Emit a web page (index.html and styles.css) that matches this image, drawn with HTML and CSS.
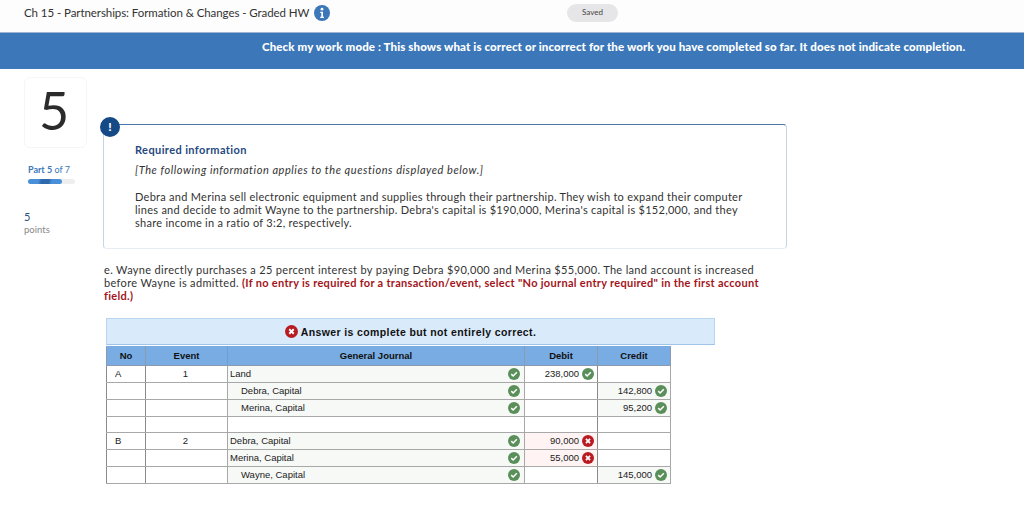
FILE: index.html
```html
<!DOCTYPE html>
<html lang="en">
<head>
<meta charset="utf-8">
<title>Ch 15 - Partnerships: Formation &amp; Changes - Graded HW</title>
<link rel="stylesheet" href="styles.css">
<svg width="0" height="0" class="defs">
  <symbol id="ok" viewBox="0 0 14 14"><circle cx="7" cy="7" r="7" fill="#5a8f5a"/><path d="M3.8 7.2 6 9.3 10.3 5" fill="none" stroke="#fff" stroke-width="1.8"/></symbol>
  <symbol id="no" viewBox="0 0 14 14"><circle cx="7" cy="7" r="7" fill="#b81c22"/><path d="M4.6 4.6 9.4 9.4M9.4 4.6 4.6 9.4" fill="none" stroke="#fff" stroke-width="2"/></symbol>
</svg>
</head>
<body>
<header class="topbar">
  <div class="title"><span class="title-text">Ch 15 - Partnerships: Formation &amp; Changes - Graded HW</span>
    <svg class="info" viewBox="0 0 16 16"><circle cx="8" cy="8" r="8" fill="#3b77b9"/><circle cx="8" cy="4.2" r="1.4" fill="#fff"/><path d="M6.2 6.8H9v5h1v1.2H6.2v-1.2h1.1V8H6.2z" fill="#fff"/></svg>
  </div>
  <div class="saved">Saved</div>
</header>
<div class="banner">Check my work mode : This shows what is correct or incorrect for the work you have completed so far. It does not indicate completion.</div>
<div class="page">
  <aside class="side">
    <div class="qnum">5</div>
    <div class="part"><b>Part 5</b> of 7</div>
    <div class="track"><div class="fill"></div></div>
    <div class="pts">5</div>
    <div class="ptlabel">points</div>
  </aside>
  <main class="main">
    <section class="req">
      <div class="badge">!</div>
      <h2 class="req-title">Required information</h2>
      <p class="req-note">[The following information applies to the questions displayed below.]</p>
      <p class="req-body">Debra and Merina sell electronic equipment and supplies through their partnership. They wish to expand their computer lines and decide to admit Wayne to the partnership. Debra's capital is $190,000, Merina's capital is $152,000, and they share income in a ratio of 3:2, respectively.</p>
    </section>
    <p class="question">e. Wayne directly purchases a 25 percent interest by paying Debra $90,000 and Merina $55,000. The land account is increased before Wayne is admitted. <strong>(If no entry is required for a transaction/event, select "No journal entry required" in the first account field.)</strong></p>
    <div class="answer"><svg class="ico"><use href="#no"/></svg>Answer is complete but not entirely correct.</div>
    <table class="journal">
      <colgroup><col class="c1"><col class="c2"><col class="c3"><col class="c4"><col class="c5"></colgroup>
      <thead><tr><th>No</th><th>Event</th><th>General Journal</th><th>Debit</th><th>Credit</th></tr></thead>
      <tbody>
        <tr><td class="no">A</td><td class="ev">1</td><td class="acct">Land<svg class="ico"><use href="#ok"/></svg></td><td class="num">238,000<svg class="ico"><use href="#ok"/></svg></td><td class="num"></td></tr>
        <tr><td></td><td></td><td class="acct ind">Debra, Capital<svg class="ico"><use href="#ok"/></svg></td><td class="num"></td><td class="num hit">142,800<svg class="ico"><use href="#ok"/></svg></td></tr>
        <tr><td></td><td></td><td class="acct ind">Merina, Capital<svg class="ico"><use href="#ok"/></svg></td><td class="num"></td><td class="num hit">95,200<svg class="ico"><use href="#ok"/></svg></td></tr>
        <tr class="blank"><td></td><td></td><td class="empty"></td><td></td><td></td></tr>
        <tr><td class="no">B</td><td class="ev">2</td><td class="acct">Debra, Capital<svg class="ico"><use href="#ok"/></svg></td><td class="num bad">90,000<svg class="ico"><use href="#no"/></svg></td><td class="num"></td></tr>
        <tr><td></td><td></td><td class="acct">Merina, Capital<svg class="ico"><use href="#ok"/></svg></td><td class="num bad">55,000<svg class="ico"><use href="#no"/></svg></td><td class="num"></td></tr>
        <tr><td></td><td></td><td class="acct ind">Wayne, Capital<svg class="ico"><use href="#ok"/></svg></td><td class="num"></td><td class="num hit">145,000<svg class="ico"><use href="#ok"/></svg></td></tr>
      </tbody>
    </table>
  </main>
</div>
</body>
</html>
```
FILE: styles.css
```css
* { box-sizing: border-box; }
html, body { margin: 0; padding: 0; }
body { width: 1024px; height: 512px; overflow: hidden; background: #fff; color: #2d2d2d; font-family: "Lato", "Open Sans", sans-serif; }
.defs { position: absolute; }
.topbar { height: 33px; display: flex; align-items: flex-start; background: #fdfdfd; border-bottom: 1px solid #9db5d3; padding: 4px 0 0 24px; }
.title { width: 543px; height: 18px; flex: none; display: flex; align-items: center; gap: 5px; font-size: 11.5px; letter-spacing: -.07px; color: #333; white-space: nowrap; }
.title-text { padding-bottom: 2px; }
.info { width: 16px; height: 16px; }
.saved { width: 51px; height: 18px; border-radius: 9px; background: #e6e5e8; font-size: 8px; line-height: 17px; text-align: center; color: #444; }
.banner { height: 36px; background: #3b77b9; color: #fff; font-size: 11.5px; font-weight: 900; padding: 6px 0 0 262px; line-height: 16px; letter-spacing: .12px; white-space: nowrap; }
.page { display: flex; }
.side { width: 103px; flex: none; padding: 8px 0 0 24px; }
.qnum { width: 63px; height: 71px; border: 1px solid #f6f6f6; border-radius: 6px; padding-right: 3px; font-size: 52px; line-height: 64px; text-align: center; color: #2b2b2b; font-weight: 400; }
.part { margin: 15px 0 0 4px; font-size: 9px; line-height: 13px; color: #3b77b9; }
.part b { font-weight: 700; }
.track { width: 47px; height: 5px; margin: 3px 0 0 4px; border-radius: 3px; background: #eeeeee; }
.fill { width: 34px; height: 5px; border-radius: 3px; background: linear-gradient(100deg, #4a90d9 0 30%, #2f69ad 40% 60%, #4a90d9 70%); }
.pts { margin-top: 26px; font-size: 11px; line-height: 14px; color: #2f4f7f; }
.ptlabel { font-size: 9.5px; line-height: 12px; color: #888; }
.main { width: 690px; flex: none; padding-top: 55px; }
.req { position: relative; width: 684px; height: 125px; border: 1px solid #c4d5e8; border-top: 1px solid #4a76a8; border-bottom-color: #e6edf5; border-radius: 4px; padding: 17px 30px 0 31px; }
.badge { position: absolute; left: -4px; top: -8px; width: 20px; height: 20px; border-radius: 50%; background: #164a86; color: #fff; font-weight: 900; font-size: 12px; line-height: 20px; text-align: center; }
.req-title { margin: 0; font-size: 11px; line-height: 15px; font-weight: 700; color: #1f4a80; letter-spacing: .4px; }
.req-note { margin: 6px 0 0; font-size: 11px; line-height: 14px; font-style: italic; color: #333; letter-spacing: .55px; }
.req-body { margin: 13px 0 0; font-size: 11px; line-height: 13px; color: #333; letter-spacing: .27px; }
.question { margin: 14px 0 0 1px; width: 664px; font-size: 11px; line-height: 13px; color: #333; letter-spacing: .33px; }
.question strong { color: #a3151b; font-weight: 700; letter-spacing: .3px; }
.answer { display: flex; align-items: center; justify-content: center; gap: 3px; width: 609px; height: 27px; margin: 16px 0 0 3px; background: #d9eafa; border: 1px solid #b9d4ee; border-bottom: 1px solid #a0c4e8; font-family: "Liberation Sans", sans-serif; font-size: 10.5px; font-weight: 700; color: #111; letter-spacing: .38px; }
.ico { width: 12px; height: 12px; flex: none; }
.answer .ico { width: 13px; height: 13px; }
.journal { width: 564px; margin: 1px 0 0 3px; border-collapse: collapse; table-layout: fixed; font-family: "Liberation Sans", sans-serif; font-size: 9.5px; color: #222; }
.c1 { width: 39px; } .c2 { width: 82px; } .c3 { width: 297px; } .c4 { width: 73px; } .c5 { width: 73px; }
th { height: 19px; padding: 0 0 2px; background: #78ace3; font-size: 9.5px; font-weight: 700; color: #111; border: 1px solid #8a9bb0; border-top-color: #78ace3; }
th:nth-child(2) { border-right-color: #6f9fd2; }
th:nth-child(3) { border-left-color: #6f9fd2; }
td { height: 17px; padding: 0; border: 1px solid #a8a8a8; line-height: 12px; }
td:first-child { border-left: 1px solid #8a8a8a; border-right: 1px solid #8a8a8a; }
td:nth-child(4) { border-left: 1px solid #8a8a8a; border-right: 1px solid #8a8a8a; }
.blank td { height: 16px; }
.no { padding-left: 8px; }
.ev { text-align: center; padding-right: 2px; }
.acct { position: relative; background: #f7f9f7; padding-left: 2px; border-left-color: #e0e0e0; }
.acct .ico { position: absolute; right: 4px; top: 2px; }
.ind { padding-left: 13px; }
.empty { border-left-color: #e0e0e0; }
.num { text-align: right; padding-right: 3px; }
.num .ico { margin-left: 3px; vertical-align: -3px; }
.hit { background: #f7f9f7; }
.bad { background: #fff4f3; }
```
